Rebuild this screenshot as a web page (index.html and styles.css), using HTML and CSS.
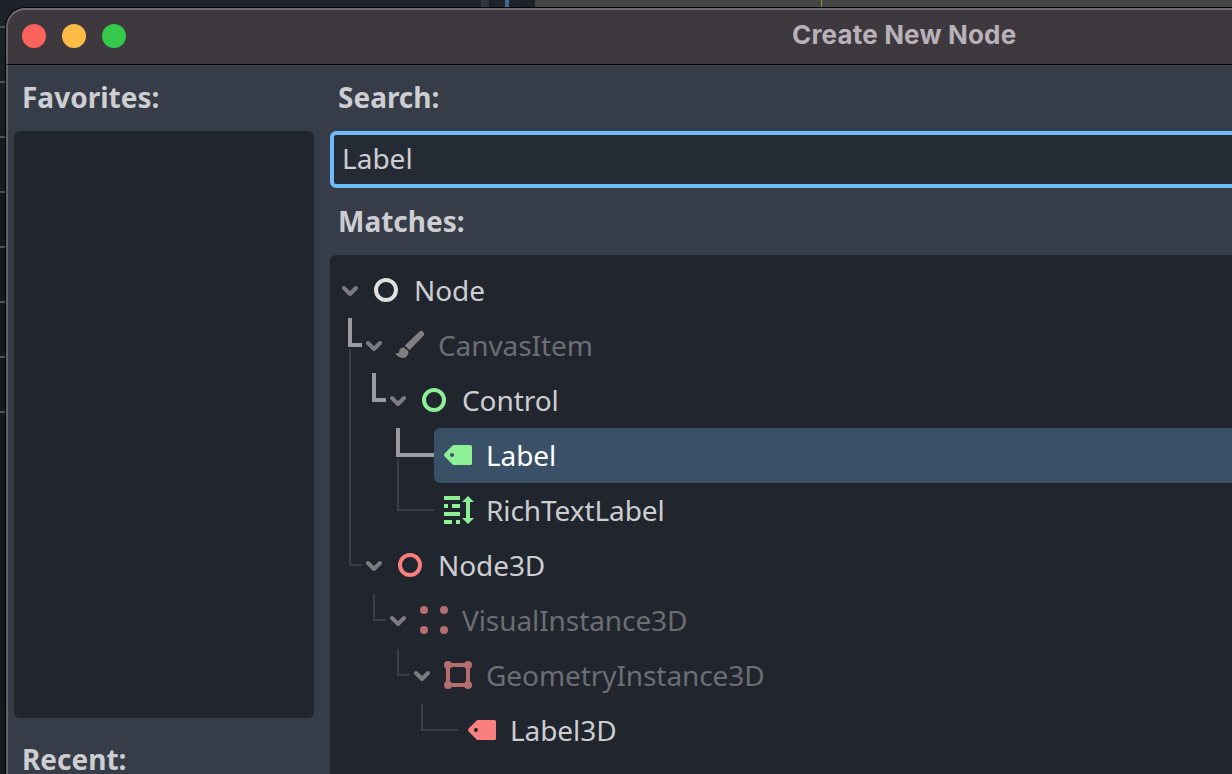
FILE: index.html
```html
<!DOCTYPE html>
<html lang="en">
<head>
<meta charset="utf-8">
<title>Create New Node</title>
<link rel="stylesheet" href="styles.css">
</head>
<body>
<div class="desktop">
  <div class="ruler"><i></i><i></i><i></i><i></i><i></i><i></i><i></i><i></i></div>
  <div class="backdrop"><span class="split"></span><span class="cursor"></span><span class="viewport"></span></div>
  <main class="window">
    <header class="titlebar">
      <div class="lights"><span class="light close"></span><span class="light minimize"></span><span class="light expand"></span></div>
      <h1 class="title">Create New Node</h1>
    </header>
    <div class="content">
      <aside class="sidebar">
        <h2 class="heading">Favorites:</h2>
        <div class="favorites"></div>
        <h2 class="heading recent">Recent:</h2>
      </aside>
      <section class="results">
        <h2 class="heading">Search:</h2>
        <div class="search">Label</div>
        <h2 class="heading matches">Matches:</h2>
        <div class="tree">
          <div class="row">
            <svg class="guides" width="32" height="55"><path class="chevron" d="M14 25l6 6 6-6"/></svg>
            <div class="item"><svg class="icon white" viewBox="0 0 16 16"><circle class="ring" cx="8" cy="8" r="5"/></svg><span class="name">Node</span></div>
          </div>
          <div class="row">
            <svg class="guides" width="56" height="55"><path class="active" d="M20 0v27h12"/><path class="line" d="M20 31v24"/><path class="chevron" d="M38 25l6 6 6-6"/></svg>
            <div class="item dim"><svg class="icon white" viewBox="0 0 16 16"><path d="M14.6 1.4a1.45 1.45 0 0 0-2 0L5.4 8.3l2.3 2.3 6.9-7.1a1.5 1.5 0 0 0 0-2.1zM4.8 9.1c-1.3.1-2.1.9-2.2 2.1 0 .8-.6 1.1-1.3.8-.7-.2-.5.3-.1.9 1 1.6 3.8 2.1 5.1.8 1-1 1.1-2.4.6-3z"/></svg><span class="name">CanvasItem</span></div>
          </div>
          <div class="row">
            <svg class="guides" width="80" height="55"><path class="line" d="M20 0v55"/><path class="active" d="M44 0v27h12"/><path class="chevron" d="M62 25l6 6 6-6"/></svg>
            <div class="item"><svg class="icon green" viewBox="0 0 16 16"><circle class="ring" cx="8" cy="8" r="5"/></svg><span class="name">Control</span></div>
          </div>
          <div class="row">
            <svg class="guides" width="104" height="55"><path class="line" d="M20 0v55M68 31v24"/><path class="active" d="M68 0v27h36"/></svg>
            <div class="item selected"><svg class="icon green" viewBox="0 0 16 16"><path fill-rule="evenodd" d="M6 3Q5.6 3 5.3 3.3L1.3 7.3Q.7 8 1.3 8.7L5.3 12.7Q5.6 13 6 13H14.2Q15 13 15 12.2V3.8Q15 3 14.2 3zM5 7a1 1 0 1 1 0 2 1 1 0 0 1 0-2z"/></svg><span class="name">Label</span></div>
          </div>
          <div class="row">
            <svg class="guides" width="104" height="55"><path class="line" d="M20 0v55M68 0v27h36"/></svg>
            <div class="item"><svg class="icon green" viewBox="0 0 16 16"><path d="M1 1h8v2H1zM1 5h2v2H1zM5 5h4v2H5zM1 9h8v2H1zM1 13h4v2H1zM7 13h2v2H7zM13 1l3 3h-2v8h2l-3 3-3-3h2V4h-2z"/></svg><span class="name">RichTextLabel</span></div>
          </div>
          <div class="row">
            <svg class="guides" width="56" height="55"><path class="line" d="M20 0v27h12"/><path class="chevron" d="M38 25l6 6 6-6"/></svg>
            <div class="item"><svg class="icon red" viewBox="0 0 16 16"><circle class="ring" cx="8" cy="8" r="5"/></svg><span class="name">Node3D</span></div>
          </div>
          <div class="row">
            <svg class="guides" width="80" height="55"><path class="line" d="M44 1v26h12"/><path class="chevron" d="M62 25l6 6 6-6"/></svg>
            <div class="item dim"><svg class="icon red" viewBox="0 0 16 16"><circle cx="3" cy="3" r="2"/><circle cx="13" cy="3" r="2"/><circle cx="3" cy="13" r="2"/><circle cx="13" cy="13" r="2"/></svg><span class="name">VisualInstance3D</span></div>
          </div>
          <div class="row">
            <svg class="guides" width="104" height="55"><path class="line" d="M68 1v26h12"/><path class="chevron" d="M86 25l6 6 6-6"/></svg>
            <div class="item dim"><svg class="icon red" viewBox="0 0 16 16"><circle cx="3" cy="3" r="2"/><circle cx="13" cy="3" r="2"/><circle cx="3" cy="13" r="2"/><circle cx="13" cy="13" r="2"/><path class="ring" d="M3 3h10v10H3z"/></svg><span class="name">GeometryInstance3D</span></div>
          </div>
          <div class="row">
            <svg class="guides" width="128" height="55"><path class="line" d="M92 1v26h36"/></svg>
            <div class="item"><svg class="icon red" viewBox="0 0 16 16"><path fill-rule="evenodd" d="M6 3Q5.6 3 5.3 3.3L1.3 7.3Q.7 8 1.3 8.7L5.3 12.7Q5.6 13 6 13H14.2Q15 13 15 12.2V3.8Q15 3 14.2 3zM5 7a1 1 0 1 1 0 2 1 1 0 0 1 0-2z"/></svg><span class="name">Label3D</span></div>
          </div>
        </div>
      </section>
    </div>
  </main>
</div>
</body>
</html>
```
FILE: styles.css
```css
* { box-sizing: border-box; }
body { margin: 0; overflow: hidden; background: #16191e; font-family: "Noto Sans", sans-serif; font-size: 28px; color: #cdced1; }
.desktop { display: grid; grid-template: 7px 767px / 5px 1227px; width: 1232px; height: 774px; overflow: hidden; background: linear-gradient(#1e232b, #15181c 200px); }
.ruler { grid-column: 1; grid-row: 1 / 3; display: flex; flex-direction: column; gap: 53px; padding-top: 26px; }
.ruler i { height: 2px; flex: none; background: #505154; }
.backdrop { grid-column: 2; grid-row: 1; display: flex; background: #1e232b; }
.split { width: 8px; margin-left: 476px; background: #2f3540; }
.cursor { width: 4px; margin-left: 16px; background: #456789; box-shadow: -16px 0 #1b1f27, 16px 0 #1b1f27; }
.viewport { flex: 1; margin-left: 26px; background: linear-gradient(90deg, transparent 286px, #75a13b 286px 287px, transparent 287px) #464646; }
.window { grid-column: 2; grid-row: 2; display: flex; flex-direction: column; width: 1260px; border: 1px solid #000; border-bottom: 0; border-radius: 20px 0 0 0; overflow: hidden; box-shadow: inset 2px 2px #716d73; background: #363c48; }
.titlebar { flex: none; display: flex; align-items: center; height: 57px; padding: 0 0 4px 14px; background: #3e383f; border-top: 2px solid #716b70; border-left: 2px solid #676168; border-bottom: 1px solid #000; border-top-left-radius: 19px; }
.lights { display: flex; gap: 16px; padding-top: 2px; width: 770px; }
.light { width: 24px; height: 24px; border-radius: 50%; }
.close { background: #fe625c; }
.minimize { background: #fdbc45; }
.expand { background: #35c84b; }
.title { margin: 0; font: 700 26px/30px Inter, sans-serif; letter-spacing: .17px; color: #b8b1b8; white-space: nowrap; }
.content { flex: 1; display: flex; gap: 16px; padding-left: 6px; border-left: 2px solid #5f626b; background: #363c48; }
.sidebar { width: 300px; display: flex; flex-direction: column; }
.heading { flex: none; margin: 0; height: 66px; padding: 12px 0 0 8px; font-size: 28px; line-height: 40px; font-weight: 700; white-space: nowrap; }
.favorites { flex: none; height: 587px; border-radius: 6px; background: #21252e; }
.recent { padding-top: 21px; }
.results { flex: 1; display: flex; flex-direction: column; }
.search { flex: none; height: 57px; padding: 3px 8px; border: 4px solid #70bafa; border-radius: 6px; background: #252b34; line-height: 40px; }
.matches { height: 67px; padding-top: 13px; }
.tree { flex: 1; padding-top: 8px; border-radius: 6px 0 0; background: #21252e; }
.row { display: flex; height: 55px; }
.guides { flex: none; display: block; fill: none; }
.line { stroke: #3a3e46; stroke-width: 2; }
.active { stroke: #9b9ca1; stroke-width: 4; }
.chevron { stroke: #7b7d82; stroke-width: 4; stroke-linecap: round; stroke-linejoin: round; }
.item { flex: 1; display: flex; gap: 12px; padding-left: 8px; border-radius: 6px; }
.icon { flex: none; width: 32px; height: 32px; margin-top: 11px; fill: currentColor; }
.ring { fill: none; stroke: currentColor; stroke-width: 2; }
.name { line-height: 55px; letter-spacing: -.08px; white-space: nowrap; }
.white { color: #e0e0e0; }
.green { color: #8eef97; }
.red { color: #fc7f7f; }
.dim .name { color: #6c6e74; }
.dim .white { color: #808080; }
.dim .red { color: #b56d6d; }
.selected { background: #3a5066; color: #fff; }
```
